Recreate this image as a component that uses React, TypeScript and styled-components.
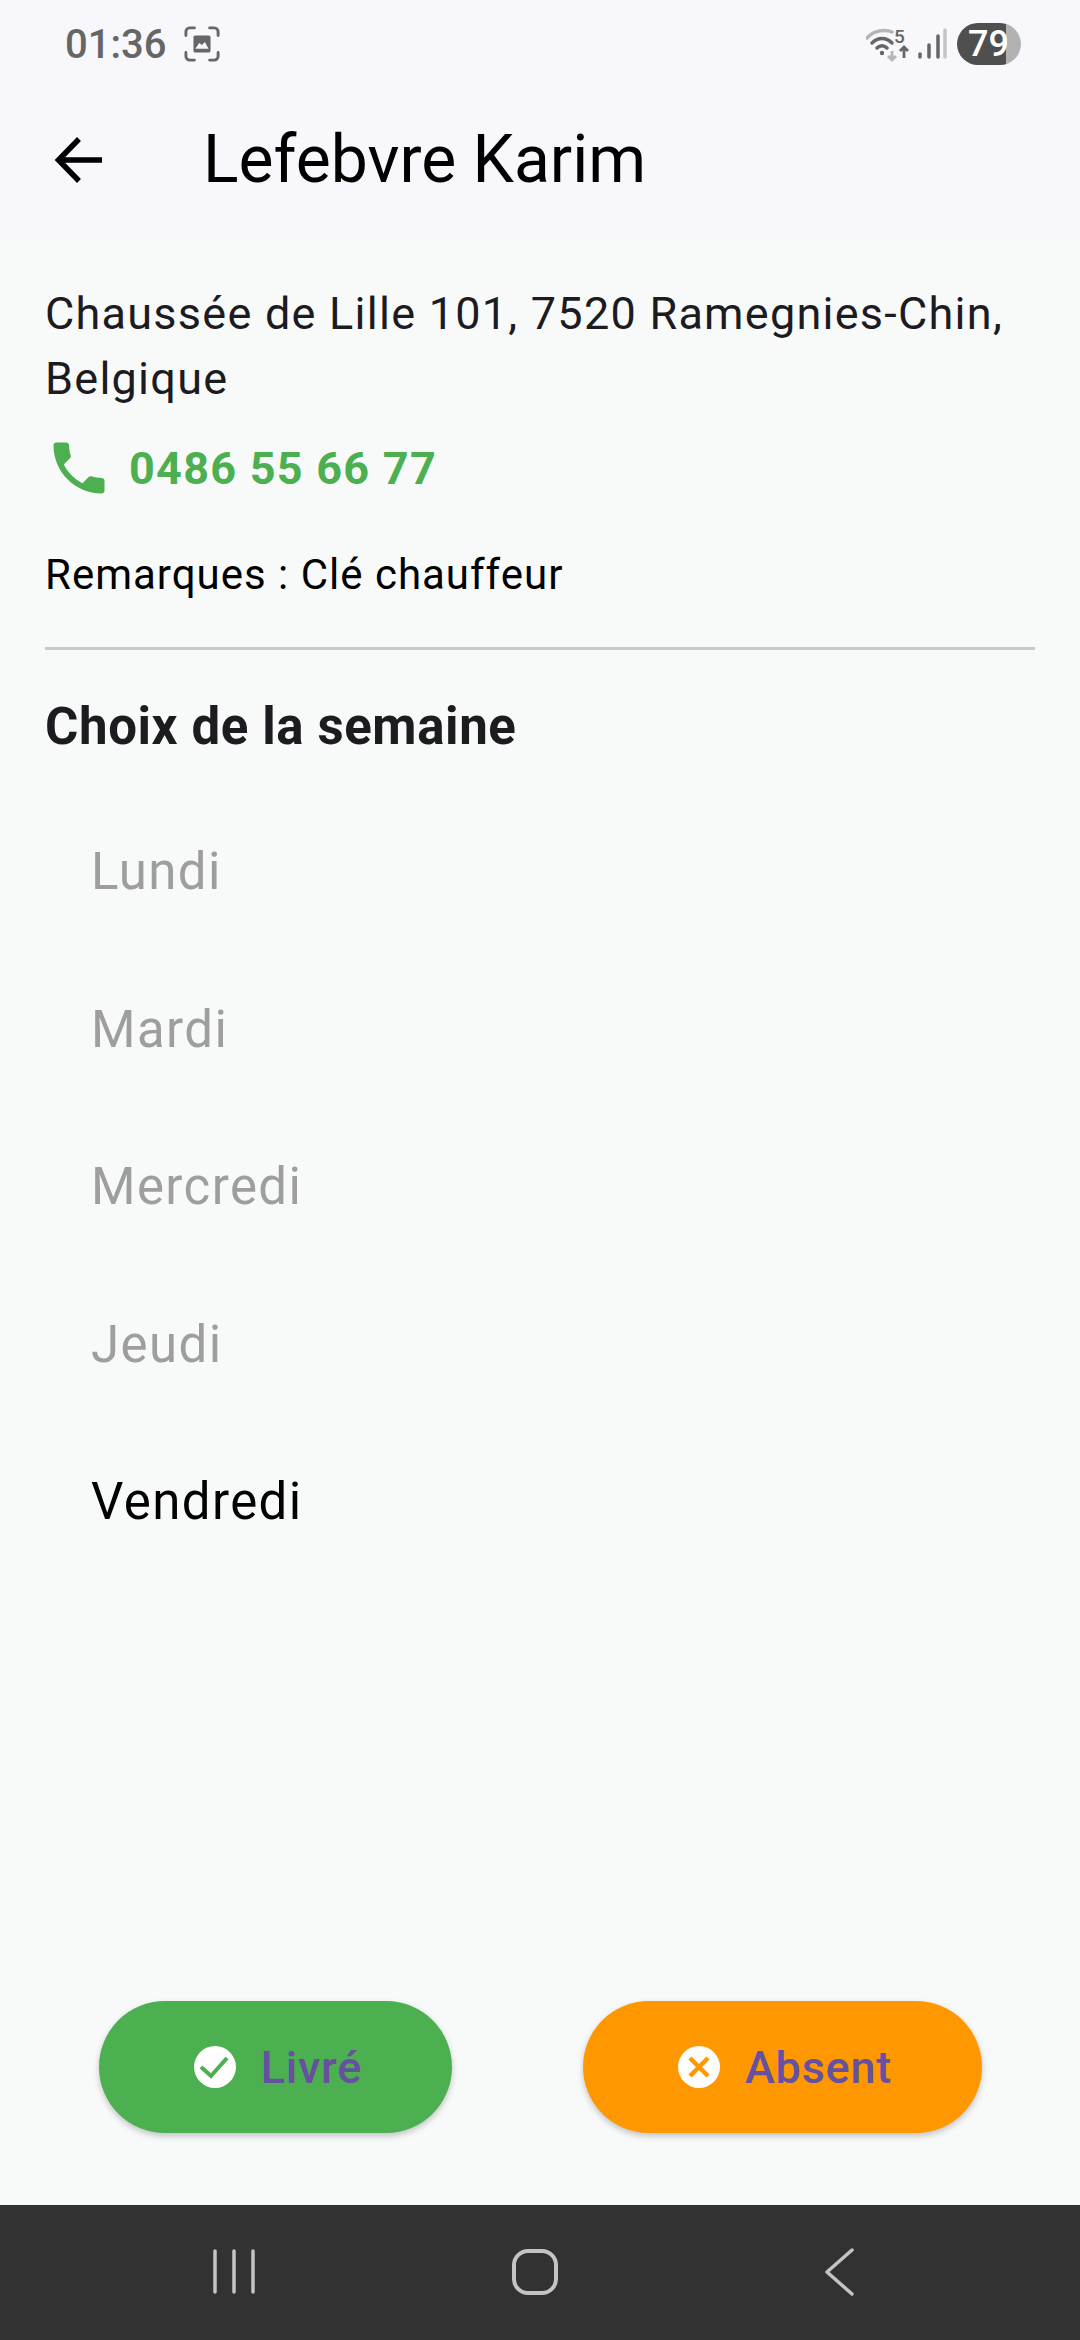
import React from "react";
import styled, { createGlobalStyle } from "styled-components";

const Global = createGlobalStyle`
  html, body { margin: 0; padding: 0; background: #f8fafa; }
  * { box-sizing: border-box; }
`;

const Screen = styled.div`
  width: 1080px;
  height: 2340px;
  display: flex;
  flex-direction: column;
  background: #f8fafa;
  font-family: Roboto, "Noto Sans", sans-serif;
  overflow: hidden;
`;

const TopArea = styled.header`
  height: 240px;
  background: #f7f7fc;
  display: flex;
  flex-direction: column;
`;

const StatusBar = styled.div`
  height: 80px;
  padding: 8px 59px 0 65px;
  display: flex;
  align-items: center;
  justify-content: space-between;
  color: #666;
`;

const StatusGroup = styled.div`
  display: flex;
  align-items: center;
`;

const Clock = styled.span`
  font-size: 40px;
  font-weight: 500;
  margin-right: 17px;
  width: 102px;
`;

const WifiIcon = styled.svg`
  width: 44px;
  height: 36px;
  margin-right: 7px;
`;

const Battery = styled.div`
  width: 64px;
  height: 42px;
  border-radius: 21px;
  margin-left: 10px;
  background: linear-gradient(to right, #4f4f4f 0 49px, #b2b2b2 49px);
  color: #fff;
  font-size: 36px;
  font-weight: 500;
  display: flex;
  align-items: center;
  justify-content: center;
  padding-right: 1px;
`;

const AppBar = styled.div`
  height: 160px;
  padding-left: 54px;
  display: flex;
  align-items: center;
`;

const BackIcon = styled.svg`
  width: 48px;
  height: 48px;
  margin-right: 101px;
  flex: none;
`;

const Title = styled.h1`
  margin: 0;
  font-size: 66px;
  font-weight: 400;
  color: #000;
  line-height: 78px;
`;

const Body = styled.main`
  flex: 1;
  padding: 0 45px;
  display: flex;
  flex-direction: column;
`;

const Address = styled.p`
  margin: 41px 0 0;
  font-size: 45px;
  line-height: 65px;
  letter-spacing: 1.25px;
  color: #1c1b1f;
`;

const PhoneRow = styled.div`
  display: flex;
  align-items: center;
  height: 66px;
  margin-top: 24px;
`;

const PhoneIcon = styled.svg`
  width: 68px;
  height: 68px;
  margin-right: 16px;
  flex: none;
`;

const PhoneNumber = styled.span`
  font-size: 45px;
  font-weight: 700;
  letter-spacing: 1.25px;
  color: #4caf50;
`;

const Remark = styled.p`
  margin: 46px 0 0;
  font-size: 42px;
  line-height: 56px;
  letter-spacing: 1px;
  color: #000;
`;

const Divider = styled.hr`
  margin: 44px 0 0;
  border: 0;
  height: 3px;
  background: #cac9d2;
`;

const SectionTitle = styled.h2`
  margin: 47px 0 0;
  font-size: 51px;
  line-height: 60px;
  font-weight: 700;
  letter-spacing: 0.6px;
  color: #1c1b1f;
`;

const DayList = styled.ul`
  list-style: none;
  margin: 36px 0 0;
  padding: 0 0 0 46px;
`;

const Day = styled.li<{ $active?: boolean }>`
  height: 157.5px;
  display: flex;
  align-items: center;
  font-size: 51px;
  letter-spacing: 1.4px;
  color: ${(p) => (p.$active ? "#000" : "#9e9e9e")};
`;

const Actions = styled.div`
  margin-top: auto;
  height: 204px;
  padding-left: 54px;
  display: flex;
  gap: 131px;
`;

const ActionButton = styled.button<{ $bg: string; $w: number }>`
  width: ${(p) => p.$w}px;
  height: 132px;
  border: 0;
  border-radius: 66px;
  background: ${(p) => p.$bg};
  box-shadow: 0 3px 6px rgba(0, 0, 0, 0.22);
  color: #65519f;
  font-family: inherit;
  font-size: 45px;
  font-weight: 500;
  letter-spacing: 0.75px;
  display: flex;
  align-items: center;
  justify-content: center;
  gap: 25px;
  padding: 0 0 0 5px;
`;

const ButtonIcon = styled.svg`
  width: 42px;
  height: 42px;
  flex: none;
`;

const NavBar = styled.nav`
  height: 135px;
  background: #323232;
  display: flex;
  align-items: center;
`;

const NavIcon = styled.svg<{ $w: number; $ml: number }>`
  width: ${(p) => p.$w}px;
  height: 48px;
  margin-left: ${(p) => p.$ml}px;
  margin-top: -2px;
  flex: none;
`;

export default function App() {
  return (
    <Screen>
      <Global />
      <TopArea>
        <StatusBar>
          <StatusGroup>
            <Clock>01:36</Clock>
            <svg width="36" height="36" viewBox="0 0 38 38" fill="none">
              <path d="M2 10V6a4 4 0 0 1 4-4h5M27 2h5a4 4 0 0 1 4 4v4M36 28v4a4 4 0 0 1-4 4h-5M11 36H6a4 4 0 0 1-4-4v-4" stroke="#666" strokeWidth="3" strokeLinecap="round" />
              <rect x="10" y="10" width="18" height="18" rx="2" fill="#666" />
              <path d="M12 24l4-6 3 2 3-3 4 7z" fill="#f7f7fc" />
            </svg>
          </StatusGroup>
          <StatusGroup>
            <WifiIcon viewBox="0 0 44 36" fill="none">
              <path d="M1 12C8 4 20 3 26 6" stroke="#b5b5b5" strokeWidth="3.5" strokeLinecap="round" />
              <path d="M6 17c6-6 14-6 20 0M11 22c3-3 7-3 10 0" stroke="#666" strokeWidth="3.5" strokeLinecap="round" />
              <circle cx="16" cy="27" r="2.2" fill="#666" />
              <path d="M26 25v9M22 30l4 4 4-4" stroke="#b5b5b5" strokeWidth="2.8" />
              <path d="M38 32V21M34 25l4-4 4 4" stroke="#666" strokeWidth="2.8" />
              <text x="28" y="17" fontSize="19" fontWeight="500" fontFamily="Roboto" fill="#666">5</text>
            </WifiIcon>
            <svg width="30" height="32" viewBox="0 0 30 32" fill="none" strokeLinecap="round" strokeWidth="3.5">
              <path d="M3 29v-3M12 29V17M21 29V8" stroke="#666" />
              <path d="M28 29V2" stroke="#c4c4c4" />
            </svg>
            <Battery>79</Battery>
          </StatusGroup>
        </StatusBar>
        <AppBar>
          <BackIcon viewBox="0 0 48 48" fill="none">
            <path d="M48 24H6M25 3L4.5 24 25 45" stroke="#000" strokeWidth="5.5" />
          </BackIcon>
          <Title>Lefebvre Karim</Title>
        </AppBar>
      </TopArea>
      <Body>
        <Address>Chaussée de Lille 101, 7520 Ramegnies-Chin, Belgique</Address>
        <PhoneRow>
          <PhoneIcon viewBox="0 0 24 24">
            <path fill="#4caf50" d="M6.62 10.79c1.44 2.83 3.76 5.14 6.59 6.59l2.2-2.2c.27-.27.67-.36 1.02-.24 1.12.37 2.33.57 3.57.57.55 0 1 .45 1 1V20c0 .55-.45 1-1 1-9.39 0-17-7.61-17-17 0-.55.45-1 1-1h3.5c.55 0 1 .45 1 1 0 1.25.2 2.45.57 3.57.11.35.03.74-.25 1.02l-2.2 2.2z" />
          </PhoneIcon>
          <PhoneNumber>0486 55 66 77</PhoneNumber>
        </PhoneRow>
        <Remark>Remarques : Clé chauffeur</Remark>
        <Divider />
        <SectionTitle>Choix de la semaine</SectionTitle>
        <DayList>
          <Day>Lundi</Day>
          <Day>Mardi</Day>
          <Day>Mercredi</Day>
          <Day>Jeudi</Day>
          <Day $active>Vendredi</Day>
        </DayList>
        <Actions>
          <ActionButton $bg="#4caf50" $w={353}>
            <ButtonIcon viewBox="0 0 42 42">
              <circle cx="21" cy="21" r="21" fill="#fff" />
              <path d="M7 21l10 9L33 12" fill="none" stroke="#4caf50" strokeWidth="4" />
            </ButtonIcon>
            Livré
          </ActionButton>
          <ActionButton $bg="#ff9800" $w={399}>
            <ButtonIcon viewBox="0 0 42 42">
              <circle cx="21" cy="21" r="21" fill="#fff" />
              <path d="M12 12l18 18M30 12L12 30" fill="none" stroke="#ff9800" strokeWidth="4.5" />
            </ButtonIcon>
            Absent
          </ActionButton>
        </Actions>
      </Body>
      <NavBar>
        <NavIcon $w={44} $ml={212} viewBox="0 0 44 48" fill="none" stroke="#c4c4c4" strokeWidth="3.5" strokeLinecap="round">
          <path d="M3 3v41M22 3v41M41 3v41" />
        </NavIcon>
        <NavIcon $w={48} $ml={255} viewBox="0 0 48 48" fill="none" stroke="#c4c4c4" strokeWidth="4">
          <rect x="3" y="3" width="42" height="42" rx="14" />
        </NavIcon>
        <NavIcon $w={32} $ml={265} viewBox="0 0 32 48" fill="none" stroke="#c4c4c4" strokeWidth="3.5" strokeLinecap="round" strokeLinejoin="round">
          <path d="M28 2L3 24l25 22" />
        </NavIcon>
      </NavBar>
    </Screen>
  );
}
